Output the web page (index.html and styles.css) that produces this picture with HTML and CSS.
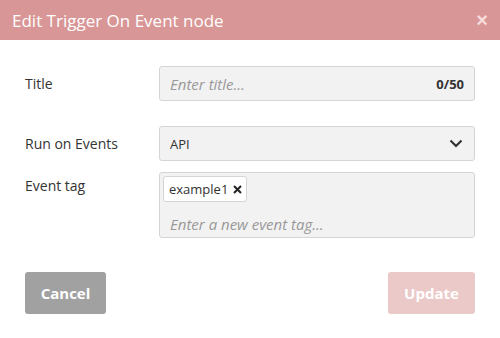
FILE: index.html
```html
<!DOCTYPE html>
<html lang="en">
<head>
  <meta charset="UTF-8" />
  <meta name="viewport" content="width=device-width, initial-scale=1.0" />
  <title>Edit Trigger On Event node</title>
  <link rel="stylesheet" href="styles.css">
</head>
<body>
  <div class="modal">
    <div class="modal-header">
      <h2>Edit Trigger On Event node</h2>
      <button class="close-btn" aria-label="Close">&times;</button>
    </div>

    <div class="modal-body">
      <div class="row row-title">
        <label for="titleInput">Title</label>
        <div class="field">
          <input type="text" id="titleInput" placeholder="Enter title..." />
          <span class="counter">0/50</span>
        </div>
      </div>

      <div class="row row-events">
        <label for="eventsSelect">Run on Events</label>
        <div class="field select-field">
          <span class="select-value">API</span>
          <svg class="chevron" width="14" height="9" viewBox="0 0 14 9">
            <path d="M1.5 1.5 L7 7 L12.5 1.5" fill="none" stroke="#333" stroke-width="2.2" />
          </svg>
        </div>
      </div>

      <div class="row row-tags">
        <label>Event tag</label>
        <div class="field tag-field">
          <div class="tags">
            <span class="tag">example1
              <svg class="tag-x" width="9" height="9" viewBox="0 0 9 9">
                <path d="M1 1 L8 8 M8 1 L1 8" stroke="#222" stroke-width="2" />
              </svg>
            </span>
          </div>
          <input type="text" class="tag-input" placeholder="Enter a new event tag..." />
        </div>
      </div>
    </div>

    <div class="modal-footer">
      <button class="btn btn-cancel">Cancel</button>
      <button class="btn btn-update">Update</button>
    </div>
  </div>
</body>
</html>
```

FILE: styles.css
```css
* {
  box-sizing: border-box;
}
body {
  margin: 0;
  background: #fff;
  font-family: "Open Sans", Arial, sans-serif;
  color: #333;
}
.modal {
  width: 500px;
  height: 338px;
  background: #fff;
  border-radius: 0 0 6px 6px;
  overflow: hidden;
}
.modal-header {
  height: 40px;
  background: #d99696;
  display: flex;
  align-items: center;
  justify-content: space-between;
  padding: 0 12px;
}
.modal-header h2 {
  margin: 0;
  font-size: 17px;
  font-weight: 400;
  color: #fff;
}
.close-btn {
  border: none;
  background: none;
  color: #f6dcdc;
  font-size: 20px;
  font-weight: bold;
  padding: 0;
  line-height: 1;
  font-family: Arial, sans-serif;
}
.modal-body {
  padding: 26px 25px 0 25px;
}
.row {
  display: grid;
  grid-template-columns: 134px 1fr;
  align-items: center;
  font-size: 14px;
}
.row label {
  color: #333;
}
.row-events {
  margin-top: 25px;
}
.row-tags {
  margin-top: 11px;
  align-items: start;
}
.row-tags label {
  padding-top: 4px;
}
.field {
  background: #f2f2f2;
  border: 1px solid #d5d5d5;
  border-radius: 3px;
  height: 35px;
  display: flex;
  align-items: center;
  padding: 0 10px;
}
.field input {
  border: none;
  background: transparent;
  font-family: inherit;
  font-size: 15px;
  flex: 1;
  outline: none;
  padding: 0;
  color: #333;
}
.field input::placeholder {
  color: #999;
  font-style: italic;
}
.counter {
  font-weight: bold;
  color: #333;
  font-size: 13px;
}
.select-value {
  font-size: 13px;
}
.select-field {
  justify-content: space-between;
}
.chevron {
  margin-right: 1px;
}
.tag-field {
  height: 66px;
  flex-direction: column;
  align-items: stretch;
  padding: 3px 3px 0 3px;
}
.tags {
  display: flex;
}
.tag {
  background: #fff;
  border: 1px solid #d5d5d5;
  border-radius: 3px;
  height: 26px;
  padding: 0 4px 0 5px;
  display: inline-flex;
  align-items: center;
  gap: 5px;
  font-size: 13px;
}
.tag-input {
  margin: 8px 7px 0 7px;
}
.modal-footer {
  display: flex;
  justify-content: space-between;
  padding: 34px 25px 0 25px;
}
.btn {
  height: 42px;
  border: none;
  border-radius: 3px;
  color: #fff;
  font-family: inherit;
  font-weight: bold;
  font-size: 15px;
  padding: 0 15px;
}
.btn-cancel {
  background: #a1a1a1;
  width: 81px;
}
.btn-update {
  background: #ebc9c9;
  width: 87px;
}
```
